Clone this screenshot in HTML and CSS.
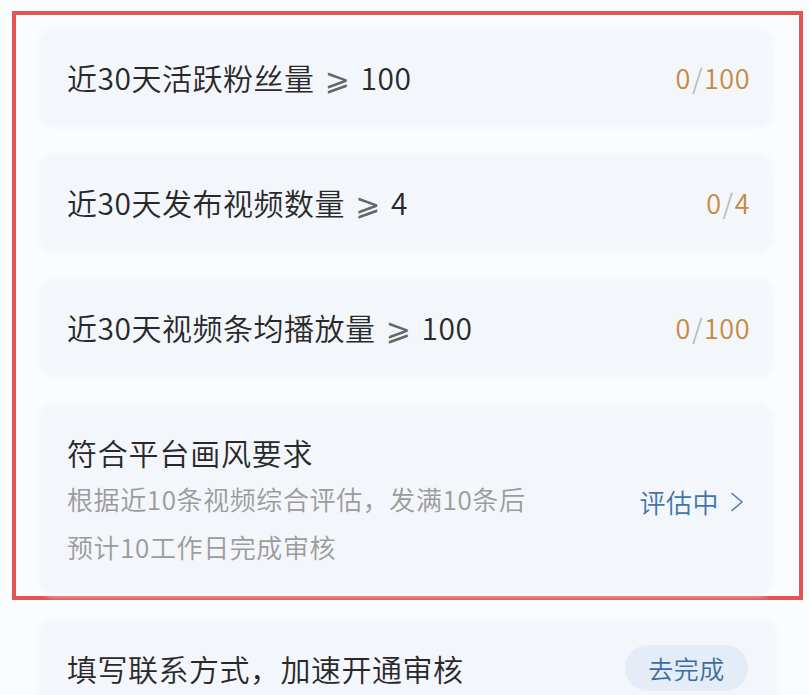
FILE: index.html
```html
<!DOCTYPE html>
<html lang="zh-CN">
<head>
<meta charset="utf-8">
<title>开通条件</title>
<link rel="stylesheet" href="styles.css">
</head>
<body>
<div class="page">
  <section class="frame">
    <div class="card row">
      <span class="label">近30天活跃粉丝量 <span class="ge">⩾</span> 100</span>
      <span class="prog">0<span class="slash">/</span>100</span>
    </div>
    <div class="card row">
      <span class="label">近30天发布视频数量 <span class="ge">⩾</span> 4</span>
      <span class="prog">0<span class="slash">/</span>4</span>
    </div>
    <div class="card row">
      <span class="label">近30天视频条均播放量 <span class="ge">⩾</span> 100</span>
      <span class="prog">0<span class="slash">/</span>100</span>
    </div>
    <div class="card tall">
      <div class="info">
        <div class="title">符合平台画风要求</div>
        <div class="sub">根据近10条视频综合评估，发满10条后</div>
        <div class="sub">预计10工作日完成审核</div>
      </div>
      <span class="status">评估中<svg class="chev" width="14" height="20" viewBox="0 0 14 20"><path d="M2 1.5 L12 10 L2 18.5" fill="none" stroke="currentColor" stroke-width="1.6" stroke-linecap="round" stroke-linejoin="round"/></svg></span>
    </div>
  </section>
  <div class="card row contact">
    <span class="label">填写联系方式，加速开通审核</span>
    <span class="pill">去完成</span>
  </div>
</div>
</body>
</html>
```

FILE: styles.css
```css
html, body {
  margin: 0;
  padding: 0;
  background: #fbfcfe;
}
body {
  font-family: "Noto Sans CJK SC", "Noto Sans", sans-serif;
  font-weight: 350;
  color: #292929;
  width: 809px;
  height: 695px;
  overflow: hidden;
}
.page {
  padding-top: 11px;
}
.frame {
  box-sizing: border-box;
  width: 791px;
  margin-left: 12px;
  border: 4px solid #e35454;
  padding: 15px 27px 3px 24px;
  display: flex;
  flex-direction: column;
  gap: 29px;
}
.card {
  background: #f3f6fa;
  border-radius: 14px;
  box-shadow: 0 0 6px 2px #f4f7fb;
  box-sizing: border-box;
}
.row {
  height: 96px;
  display: flex;
  align-items: center;
  justify-content: space-between;
  padding: 0 22px 0 27px;
}
.label {
  font-size: 30px;
  line-height: 40px;
  letter-spacing: 0.5px;
  white-space: nowrap;
}
.ge {
  font-family: "DejaVu Sans", sans-serif;
  font-weight: 400;
  font-size: 30px;
  color: #666;
  margin: 0 3px;
}
.prog {
  font-size: 27px;
  line-height: 36px;
  color: #c68a3f;
  letter-spacing: 0.5px;
}
.slash {
  color: #b9b9b9;
  margin: 0 1px;
}
.tall {
  height: 188px;
  display: flex;
  align-items: center;
  justify-content: space-between;
  padding: 27px 28px 22px 27px;
}
.info {
  align-self: flex-start;
}
.title {
  font-size: 30px;
  line-height: 40px;
  letter-spacing: 0.8px;
  margin-bottom: 3px;
}
.sub {
  font-size: 26px;
  line-height: 48px;
  letter-spacing: 0.6px;
  color: #9b9b9b;
}
.status {
  display: flex;
  align-items: center;
  gap: 11px;
  font-size: 26px;
  line-height: 36px;
  color: #3f75ad;
  letter-spacing: 0.5px;
}
.chev {
  display: block;
  color: #4a7db3;
}
.contact {
  width: 735px;
  margin: 20px 0 0 40px;
  padding-right: 27px;
}
.pill {
  display: flex;
  align-items: center;
  justify-content: center;
  width: 123px;
  height: 46px;
  border-radius: 23px;
  background: #e3ecf7;
  color: #3d6c9f;
  font-size: 25px;
  letter-spacing: 0.5px;
}
```
